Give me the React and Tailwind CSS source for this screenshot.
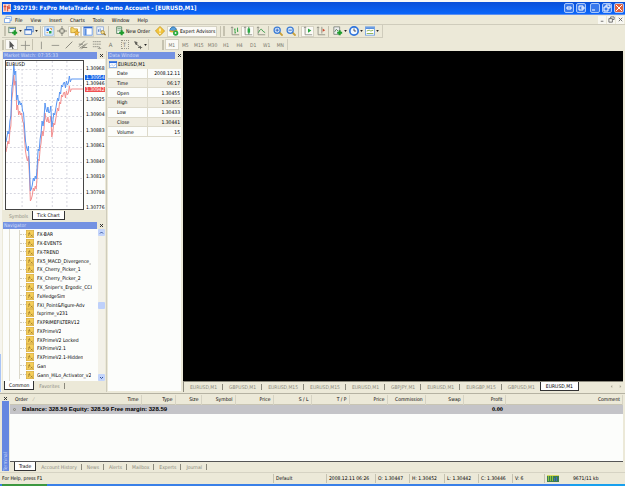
import React, { useState } from 'react';

const menus = ['File', 'View', 'Insert', 'Charts', 'Tools', 'Window', 'Help'];
const periods = ['M1', 'M5', 'M15', 'M30', 'H1', 'H4', 'D1', 'W1', 'MN'];
const prices = ['1.30968', '1.30946', '1.30925', '1.30904', '1.30883', '1.30861', '1.30840', '1.30819', '1.30798', '1.30776'];
const dataRows = [
  ['Date', '2008.12.11'],
  ['Time', '06:17'],
  ['Open', '1.30455'],
  ['High', '1.30455'],
  ['Low', '1.30433'],
  ['Close', '1.30441'],
  ['Volume', '15'],
];
const indicators = [
  'FX-BAR', 'FX-EVENTS', 'FX-TREND', 'FX5_MACD_Divergence_', 'FX_Cherry_Picker_1', 'FX_Cherry_Picker_2',
  "FX_Sniper's_Ergodic_CCI", 'FxHedgeSim', 'FXI_Point&Figure-Adv', 'fxprime_v231', 'FXPRIMEFILTERV12', 'FXPrimeV2',
  'FXPrimeV2 Locked', 'FXPrimeV2.1', 'FXPrimeV2.1-Hidden', 'Gan', 'Gann_HiLo_Activator_v2',
];
const charts = ['EURUSD,M1', 'GBPUSD,M1', 'EURUSD,M15', 'EURUSD,M15', 'EURUSD,M1', 'GBPJPY,M1', 'EURUSD,M1', 'EURGBP,M15', 'GBPUSD,M1', 'EURUSD,M1'];
const columns = [
  ['Time', 'w-[84px]'],
  ['Type', 'w-[34px]'],
  ['Size', 'w-[26px]'],
  ['Symbol', 'w-[34px]'],
  ['Price', 'w-[38px]'],
  ['S / L', 'w-[38px]'],
  ['T / P', 'w-[38px]'],
  ['Price', 'w-[38px]'],
  ['Commission', 'w-[38px]'],
  ['Swap', 'w-[38px]'],
  ['Profit', 'w-[42px]'],
  ['Comment', ''],
];
const terminalTabs = ['Trade', 'Account History', 'News', 'Alerts', 'Mailbox', 'Experts', 'Journal'];

const axes = <path d="M2.5 1v9.500H11M1 2.500l1.500-1.500 1.500 1.500" stroke="#8a8a80" fill="none" />;
const plus = <path d="M8 5v6M5 8h6" stroke="#1c9c2c" strokeWidth="2.500" />;

const icons = {
  newChart: <><rect x="1" y="1.500" width="8" height="6.500" fill="#f4f8f4" stroke="#5b7f62" /><path d="M2 3h6" stroke="#3c6fc4" />{plus}</>,
  profiles: <><rect x="3" y="1" width="8" height="6" fill="#cfe2fb" stroke="#4a7cc8" /><rect x="1" y="4" width="8" height="6" fill="#f3f8ff" stroke="#4a7cc8" /><path d="M1 4.500h8" stroke="#2b62c0" strokeWidth="1.500" /></>,
  market: <><rect x="1" y="1" width="10" height="10" fill="#eaf5ff" stroke="#7fb0e8" /><path d="M3 3h3v3H3z" fill="#2b6bd0" /><path d="M6 6h3v3H6z" fill="#2a9c4a" /><path d="M7 3h2v2M3 8h2" stroke="#d88a24" fill="none" /></>,
  cross: <><circle cx="6" cy="6" r="3" fill="none" stroke="#77776e" /><path d="M6 0v5M6 7v5M0 6h5M7 6h5" stroke="#77776e" /></>,
  folder: <><path d="M1 2h3l1 1.500h4V8H1z" fill="#f7d668" stroke="#c69a2a" /><path d="M8 5l1 2 2.500.4-2 1.600.5 2.500L8 10.500l-2 1 .5-2.500L5 7.500l2-.5z" fill="#f5b93c" stroke="#a3761a" strokeWidth=".5" /></>,
  dataWin: <><rect x="1" y="1" width="10" height="10" fill="#fff" stroke="#5a8ee0" /><path d="M1 2h10" stroke="#2c64cc" strokeWidth="1.500" /><path d="M3 3v8" stroke="#5a8ee0" strokeWidth="2.500" /></>,
  tester: <><rect x="1" y="1" width="8" height="9" fill="#eef3fb" stroke="#8aa6d4" /><path d="M3 7V4M5 7V3M7 7V5" stroke="#4a78c0" /><circle cx="8" cy="7.500" r="2" fill="#f8e39a" stroke="#b08a2c" /><path d="M9.500 9l2 2" stroke="#8c6c24" strokeWidth="1.500" /></>,
  order: <><path d="M2 1h6v8H2z" fill="#eef6ee" stroke="#4c7c58" /><path d="M3 3h4M3 5h4" stroke="#77a07f" />{plus}</>,
  warn: <><path d="M6 .5L11.500 6 6 11.500.5 6z" fill="#f3c53a" stroke="#c99a24" /><path d="M6 3v3.500M6 8v1.500" stroke="#fff" strokeWidth="1.500" /></>,
  expert: <><path d="M1 6c0-3 2-5 4-5s4 2 4 4z" fill="#58a0dc" stroke="#2a6ca8" /><path d="M1 6c2 1 5 1 9-1" stroke="#e6b030" strokeWidth="2" fill="none" /><circle cx="8" cy="8.500" r="3.200" fill="#27a83c" /><path d="M7 7l2.500 1.500L7 10z" fill="#fff" /></>,
  bars: <>{axes}<path d="M6 3v6M5 4h1M6 8h1M9 2v5M9 6h1" stroke="#239a38" /></>,
  candles: <>{axes}<path d="M7 1v9" stroke="#1a7c2c" /><path d="M5.500 3h3v5h-3z" fill="#2aa844" /></>,
  line: <>{axes}<path d="M3 8c2-5 4-5 5-2l3 2" stroke="#2c9440" fill="none" /></>,
  zoomIn: <><path d="M7.500 7.500l4 4" stroke="#c9a038" strokeWidth="2.200" /><circle cx="5" cy="5" r="3.700" fill="#d7eaff" stroke="#3d7cd4" strokeWidth="1.500" /><path d="M3 5h4M5 3v4" stroke="#2357b4" /></>,
  zoomOut: <><path d="M7.500 7.500l4 4" stroke="#c9a038" strokeWidth="2.200" /><circle cx="5" cy="5" r="3.700" fill="#d7eaff" stroke="#3d7cd4" strokeWidth="1.500" /><path d="M3 5h4" stroke="#2357b4" /></>,
  scroll: <>{axes}<path d="M6 3l4 2.500L6 8z" fill="#28a440" /></>,
  shift: <>{axes}<path d="M7 1v8" stroke="#8a8a80" /><path d="M8 3l3 2-3 2z" fill="#cc4a30" /></>,
  addInd: <><path d="M1 1h7v9H1z" fill="#eee" stroke="#788078" /><path d="M2 7l2-3 2 2" stroke="#4a7450" fill="none" />{plus}</>,
  clock: <><circle cx="6" cy="6" r="5" fill="#f3f9ff" stroke="#2f74dc" strokeWidth="2" /><path d="M6 3v3h2.500" stroke="#334" fill="none" /></>,
  template: <><rect x=".5" y="1" width="11" height="10" fill="#fff" stroke="#6a9ce0" /><path d="M1 2.500h10" stroke="#4a86dc" strokeWidth="2" /><path d="M2 6l3-1 2 1 3-1M2 9h8" stroke="#7aa63c" fill="none" /></>,
  cursor: <path d="M3 1v9l2.200-2 1.500 3 1.300-.6L6.600 7.500H9z" fill="#555" />,
  plus: <path d="M6.500 1v11M1 6.500h11" stroke="#8b8b82" />,
  vline: <path d="M6.500 2v9" stroke="#8b8b82" />,
  hline: <path d="M2 6.500h9" stroke="#8b8b82" />,
  trend: <path d="M2 10l8-8" stroke="#77776e" />,
  channel: <path d="M1 8l7-7M4 11l7-7M2 10l7-5M1 5h5M5 9h6" stroke="#77776e" fill="none" />,
  fibo: <path d="M1 2h10M1 5h10M1 8h7M9 8v3M7 10h4" stroke="#8b8b82" strokeDasharray="2 .5" />,
  arrows: <path d="M2 2l3 1-1 3zM3 4l6 5M6 9h5M9 7v4" stroke="#5c5c56" fill="#5c5c56" />,
};

const Icon = ({ name }) => <svg viewBox="0 0 12 12" className="size-[10px] shrink-0">{icons[name]}</svg>;

const Tool = ({ name, label, on, drop, children }) => (
  <button
    aria-label={label || name}
    className={`flex h-[11px] shrink-0 items-center justify-center gap-px border ${drop ? 'w-[16px]' : name && children ? 'px-px' : 'w-[13px]'} ${on ? 'border-[#d6d3c3] bg-[#fbfaf6]' : 'border-transparent'}`}
  >
    {name && <Icon name={name} />}
    {children}
    {drop && <svg viewBox="0 0 4 3" className="h-[2px] w-[3px] shrink-0"><path d="M0 0h4L2 3z" fill="#222" /></svg>}
  </button>
);

const Sep = () => <span className="mx-px h-[11px] w-px shrink-0 bg-[#c5c2b0]" />;
const Grip = () => <span className="mx-px h-[10px] w-[2px] shrink-0 border-x border-[#c5c2b0]" />;
const Cross = () => <svg viewBox="0 0 5 5" className="size-[5px]"><path d="M1 1l3 3M4 1L1 4" stroke="#222" strokeWidth=".9" /></svg>;

const PanelTitle = ({ children }) => (
  <div className="flex h-[7px] shrink-0 items-center justify-between bg-[#7492e2] pl-px leading-[7px] text-[#d3def9]">
    <span>{children}</span>
    <button aria-label={`Close ${children}`} className="flex h-[7px] w-[8px] items-center justify-center bg-[#ece9d8]"><Cross /></button>
  </div>
);

const Tabs = ({ items, active, onPick, down }) => (
  <div className="flex h-[9px] shrink-0 items-center leading-[8px] text-[#8b897c]">
    {items.map((t, i) => (
      <button
        key={i}
        onClick={() => onPick(i)}
        className={`h-[9px] whitespace-nowrap ${i === active ? 'border border-t-0 border-[#333] bg-white px-[4px] text-black' : 'pl-[5px]'}`}
      >
        <span className={i === active ? '' : down ? 'border-r border-[#8b897c] pr-[4px]' : 'pr-[4px]'}>{t}</span>
      </button>
    ))}
  </div>
);

const bid = '0,81 2,70 3,73 4,60 5,55 6,28 7,20 8,4 9,14 10,10 11,39 12,34 13,44 14,40 15,44 16,42 17,50 18,52 19,66 20,80 21,86 22,90 23,85 24,104 25,130 26,128 27,124 28,117 29,120 30,115 31,118 32,105 33,88 34,90 35,78 36,72 37,60 38,65 39,58 40,42 41,48 42,51 43,46 44,52 45,51 46,45 47,66 48,61 49,52 50,54 51,48 52,42 53,37 54,40 55,31 56,33 57,24 58,26 59,22 60,21 61,27 62,20 63,24 64,22 65,15 66,21 67,18 79,18';

const TickChart = () => (
  <svg viewBox="0 0 79 148" preserveAspectRatio="none" className="h-full w-full border border-[#444] bg-white" fill="none">
    <path d="M16.500 0v148M31.500 0v148M47.500 0v148M62.500 0v148M0 8.500h79M0 24.500h79M0 39.500h79M0 55.500h79M0 70.500h79M0 86.500h79M0 101.500h79M0 117.500h79M0 132.500h79" stroke="#d5d5de" strokeDasharray="2 2" />
    <g transform="translate(0 10)"><polyline points={bid} stroke="#f38c8c" /></g>
    <polyline points={bid} stroke="#5593f2" />
  </svg>
);

const WinButton = ({ label, red, d }) => (
  <button aria-label={label} className={`flex size-[10px] items-center justify-center rounded-[2px] border border-[#a9c8fb] ${red ? 'bg-[#e0603c]' : 'bg-[#3878ec]'}`}>
    <svg viewBox="0 0 8 8" className="size-[8px]"><path d={d} stroke="#fff" fill="none" /></svg>
  </button>
);

const App = () => {
  const [period, setPeriod] = useState('M1');
  const [watchTab, setWatchTab] = useState(1);
  const [navTab, setNavTab] = useState(0);
  const [chartTab, setChartTab] = useState(9);
  const [termTab, setTermTab] = useState(0);

  return (
    <div className="flex h-screen min-h-[420px] flex-col overflow-hidden bg-[#ece9d8] font-['DejaVu_Sans_Condensed','DejaVu_Sans',sans-serif] text-[5px] leading-[8px] text-black">
      <div className="h-[2px] shrink-0 bg-[#f8f9f6]" />
      <header className="ml-[2px] flex h-[13px] shrink-0 items-center border-b border-[#5c8ff0] bg-gradient-to-b from-[#0a50d8] to-[#0a66fa] px-px text-white">
        <svg viewBox="0 0 12 12" className="mr-[2px] size-[8px]">
          <rect width="12" height="12" fill="#f6d4cc" />
          <path d="M3 1v9M1 4h4M7 3v8M9 1v6M7 6h4" stroke="#d8402c" strokeWidth="1.500" />
        </svg>
        <h1 className="whitespace-nowrap text-[6px] font-bold">392719: FxPro MetaTrader 4 - Demo Account - [EURUSD,M1]</h1>
        <div className="ml-auto flex gap-[2px]">
          <WinButton label="Span" d="M1 4h2M5 4h2M3 2v4M5 2v4" />
          <WinButton label="Move" d="M2 2h4v4H2zM4 4h4" />
          <span />
          <WinButton label="Minimize" d="M1 6h3" />
          <WinButton label="Restore" d="M3 3V1h4v3H5M1 3h4v4H1z" />
          <WinButton label="Close" red d="M1 1l6 6M7 1L1 7" />
        </div>
      </header>

      <nav className="ml-[2px] flex h-[10px] shrink-0 items-center border-b border-[#cfccbc] pl-[2px]">
        <svg viewBox="0 0 12 12" className="mr-[3px] size-[8px]">
          <rect x="3" y="1" width="8" height="6" fill="#e8f2ff" stroke="#6fa0e4" />
          <rect x="1" y="4" width="8" height="6" fill="#fff" stroke="#5a90e0" />
        </svg>
        <div className="flex gap-[8px]">
          {menus.map((m) => <button key={m}>{m}</button>)}
        </div>
        <div className="ml-auto flex gap-px pr-px">
          {[['Minimize chart', 'M2 6h3'], ['Restore chart', 'M3 3V1h4v3H5M1 3h4v4H1z'], ['Close chart', 'M2 2l4 4M6 2L2 6']].map(([label, d]) => (
            <button key={label} aria-label={label} className="flex size-[8px] items-center justify-center bg-[#f8f7f1]">
              <svg viewBox="0 0 8 8" className="size-[7px]"><path d={d} stroke="#666" fill="none" /></svg>
            </button>
          ))}
        </div>
      </nav>

      <div className="ml-[2px] flex h-[13px] shrink-0 items-center">
        <div className="flex h-full items-center border-b border-r border-[#cfccbc] pl-px">
          <Grip />
          <Tool name="newChart" drop />
          <Tool name="profiles" drop />
          <Sep />
          <Tool name="market" on />
          <Tool name="cross" />
          <Tool name="folder" on />
          <Tool name="dataWin" on />
          <Tool name="tester" />
          <Sep />
          <span className="w-[3px]" />
          <Tool name="order">New Order</Tool>
          <span className="w-px" />
          <Tool name="warn" />
          <span className="w-px" />
          <Tool name="expert" on>Expert Advisors</Tool>
          <span className="w-[2px]" />
          <Sep />
          <Grip />
          <span className="w-[2px]" />
          <Tool name="bars" />
          <Tool name="candles" on />
          <Tool name="line" />
          <Sep />
          <span className="w-px" />
          <Tool name="zoomIn" />
          <Tool name="zoomOut" />
          <Sep />
          <span className="w-px" />
          <Tool name="scroll" on />
          <Tool name="shift" />
          <Sep />
          <span className="w-[2px]" />
          <Tool name="addInd" drop />
          <Tool name="clock" drop />
          <Tool name="template" drop />
          <span className="w-[2px]" />
        </div>
      </div>

      <div className="ml-[2px] flex h-[13px] shrink-0 items-center text-[#77756a]">
        <div className="flex w-[147px] shrink-0 items-center border-r border-[#cfccbc]">
          <span className="mr-px h-[10px] w-[2px] shrink-0 border-x border-[#c5c2b0]" />
          <Tool name="cursor" on />
          <Tool name="plus" />
          <Sep />
          <div className="flex flex-1 items-center justify-between">
            <Tool name="vline" />
            <Tool name="hline" />
            <Tool name="trend" />
            <Tool name="channel" />
            <Tool name="fibo" />
            <Tool label="Text"><span className="text-[6px]">A</span></Tool>
            <Tool label="Text label"><span className="w-[8px] border border-dotted border-[#9a988c] text-[6px] leading-[7px]">T</span></Tool>
            <Tool name="arrows" drop />
          </div>
        </div>
        <div className="ml-[12px] flex w-[127px] shrink-0 items-center border-r border-[#cfccbc]">
          <Grip />
          {periods.map((p) => (
            <button
              key={p}
              onClick={() => setPeriod(p)}
              className={`h-[11px] min-w-0 flex-1 border text-center ${p === period ? 'border-[#d6d3c3] bg-[#fbfaf6]' : 'border-transparent'}`}
            >
              {p}
            </button>
          ))}
        </div>
      </div>

      <main className="flex min-h-0 flex-1">
        <div className="flex w-[2px] shrink-0 flex-col justify-end bg-[#f6f5ee]"><span className="h-[38px] w-px bg-[#a8c4f6]" /></div>

        <div className="flex w-[104px] shrink-0 flex-col pl-px pr-px pt-px">
          <section className="flex h-[170px] shrink-0 flex-col">
            <PanelTitle>Market Watch: 07:35:33</PanelTitle>
            <div className="flex min-h-0 flex-1 bg-[#fcfdfb] pl-[2px] pt-px">
              <div className="relative min-w-0 flex-1">
                <TickChart />
                <span className="absolute left-px top-0">EURUSD</span>
              </div>
              <div className="relative flex w-[21px] flex-col justify-between pl-[2px] pt-[6px]">
                {prices.map((p) => <span key={p} className="leading-[5px]">{p}</span>)}
                <span className="absolute left-px top-[15px] w-[20px] bg-[#1464e8] pl-px leading-[5px] text-white">1.30954</span>
                <span className="absolute left-px top-[27px] w-[20px] bg-[#f05050] pl-px leading-[5px] text-white">1.30942</span>
              </div>
            </div>
            <div className="pb-[2px] pl-px pt-px"><Tabs items={['Symbols', 'Tick Chart']} active={watchTab} onPick={setWatchTab} /></div>
          </section>

          <section className="flex min-h-0 flex-1 flex-col">
            <PanelTitle>Navigator</PanelTitle>
            <div className="flex min-h-0 flex-1 bg-[#fcfdfb]">
              <ul className="ml-[6px] flex min-w-0 flex-1 flex-col border-l border-[#e2dfd2] pb-[2px] pt-px">
                {indicators.map((name) => (
                  <li key={name} className="ml-[9px] flex min-h-0 flex-1 items-center border-l border-[#dcd9cb]">
                    <span className="w-[6px] shrink-0 border-t border-dotted border-[#cfccbc]" />
                    <svg viewBox="0 0 12 12" className="mr-[3px] size-[8px] shrink-0">
                      <rect x=".5" y=".5" width="11" height="11" fill="#f4cd58" stroke="#d6a83a" />
                      <path d="M6 3c-2 0-1 6-3 6M3.500 5.500h3M7 7l3 3M10 7l-3 3" stroke="#94722a" fill="none" />
                    </svg>
                    <span className="overflow-hidden whitespace-nowrap">{name}</span>
                  </li>
                ))}
              </ul>
              <div className="flex w-[7px] shrink-0 flex-col items-center bg-[#f3f1e8]">
                <button aria-label="Scroll up" className="h-[7px] w-full rounded-[1px] bg-[#c3d4fb]">
                  <svg viewBox="0 0 7 7" className="size-[7px]"><path d="M2 4.500L3.500 3 5 4.500" stroke="#34549c" fill="none" /></svg>
                </button>
                <span className="mt-[66px] h-[7px] w-full rounded-[1px] bg-[#bed0fa]" />
                <button aria-label="Scroll down" className="mt-auto h-[7px] w-full rounded-[1px] bg-[#c3d4fb]">
                  <svg viewBox="0 0 7 7" className="size-[7px]"><path d="M2 3l1.500 1.500L5 3" stroke="#34549c" fill="none" /></svg>
                </button>
              </div>
            </div>
            <div className="pb-[2px] pl-px"><Tabs items={['Common', 'Favorites']} active={navTab} onPick={setNavTab} down /></div>
          </section>
        </div>

        <section className="flex w-[77px] shrink-0 flex-col border-l border-[#cfccbc] pl-px pt-px">
          <PanelTitle>Data Window</PanelTitle>
          <div className="mb-px mr-[2px] flex-1 bg-[#fcfdfb]">
            <div className="flex h-[10px] items-center gap-px bg-[#ece9d8] pl-px">
              <svg viewBox="0 0 14 12" className="h-[7px] w-[8px]">
                <rect x=".5" y=".5" width="13" height="11" fill="#fff" stroke="#3f7ce0" />
                <path d="M0 2h14" stroke="#2c6ce0" strokeWidth="3" />
                <path d="M2 9l3-3 3 3 4-4" stroke="#7ba4e4" fill="none" />
              </svg>
              EURUSD,M1
            </div>
            <table className="h-[68px] w-full border-collapse">
              <tbody>
                {dataRows.map(([k, v]) => (
                  <tr key={k} className="border-b border-[#dddacb] even:bg-[#efece0]">
                    <th scope="row" className="w-[39px] border-r border-[#dddacb] p-0 pl-[9px] text-left font-normal">{k}</th>
                    <td className="p-0 pr-px text-right">{v}</td>
                  </tr>
                ))}
              </tbody>
            </table>
          </div>
        </section>

        <section className="flex min-w-0 flex-1 flex-col pr-[2px]">
          <div className="flex-1 bg-black" />
          <div className="flex h-[11px] shrink-0 items-start border-l border-t border-[#8b897c] leading-[8px] text-[#8b897c]">
            {charts.map((c, i) => (
              <button
                key={i}
                onClick={() => setChartTab(i)}
                className={`flex h-[9px] items-center whitespace-nowrap ${i === chartTab ? 'border border-t-0 border-[#333] bg-white px-[5px] text-black' : 'pl-[6px]'}`}
              >
                <span className={i === chartTab ? '' : i === 8 ? 'pr-[5px]' : 'border-r border-[#8b897c] pr-[5px] leading-[6px]'}>{c}</span>
              </button>
            ))}
            <div className="ml-auto flex gap-[6px] pr-px pt-[2px]">
              <svg viewBox="0 0 4 6" className="h-[5px] w-[3px]"><path d="M3 1L1 3l2 2z" fill="#aaa796" /></svg>
              <svg viewBox="0 0 4 6" className="h-[5px] w-[3px]"><path d="M1 1l2 2-2 2z" fill="#aaa796" /></svg>
            </div>
          </div>
        </section>
      </main>

      <section className="mt-px flex h-[79px] shrink-0 border-t border-[#b5b2a2] pl-[2px] pr-[2px] pt-px">
        <div className="flex w-[7px] shrink-0 flex-col">
          <button aria-label="Close Terminal" className="flex h-[6px] items-center justify-center"><Cross /></button>
          <div className="mb-px flex flex-1 items-center bg-[#6587e0] text-[#c9d6f8] [writing-mode:vertical-rl]">
            <span className="mt-auto rotate-180 leading-[7px]">Terminal</span>
          </div>
        </div>
        <div className="flex min-w-0 flex-1 flex-col pl-px">
          <div className="flex-1 border-b border-[#555] bg-[#fcfdfb]">
            <table className="w-full table-fixed border-collapse">
              <thead>
                <tr className="h-[9px] border-b border-[#c8c5b4] bg-[#ece9d8]">
                  <th className="w-[47px] p-0 pl-[5px] text-left font-normal">Order <span className="ml-[4px] text-[#aaa796]">⁄</span></th>
                  {columns.map(([c, w], i) => (
                    <th key={i} className={`${w} whitespace-nowrap border-r border-[#d6d3c3] p-0 pr-[2px] text-right font-normal`}>{c}</th>
                  ))}
                </tr>
              </thead>
              <tbody>
                <tr className="h-[10px] bg-[#c4c4c8] font-bold">
                  <td colSpan={11} className="whitespace-nowrap p-0 pl-[3px] font-['Liberation_Sans',sans-serif] text-[6px] leading-[8px]">
                    <span className="mr-[6px] inline-block size-[3px] rounded-full border border-[#88867a]" />
                    Balance: 328.59 Equity: 328.59 Free margin: 328.59
                  </td>
                  <td className="p-0 pr-[2px] text-right">0.00</td>
                  <td />
                </tr>
              </tbody>
            </table>
          </div>
          <div className="pb-px pl-[4px]"><Tabs items={terminalTabs} active={termTab} onPick={setTermTab} down /></div>
        </div>
      </section>

      <footer className="flex h-[12px] shrink-0 items-center border-t border-[#d6d3c3] pl-[2px] leading-[9px]">
        <span className="flex-1">For Help, press F1</span>
        <span className="w-[53px] border-l border-[#c5c2b0] pl-[2px]">Default</span>
        <span className="w-[49px] whitespace-nowrap border-l border-[#c5c2b0] pl-[2px]">2008.12.11 06:26</span>
        <span className="w-[34px] border-l border-[#c5c2b0] pl-[2px]">O: 1.30447</span>
        <span className="w-[35px] border-l border-[#c5c2b0] pl-[2px]">H: 1.30452</span>
        <span className="w-[34px] border-l border-[#c5c2b0] pl-[2px]">L: 1.30442</span>
        <span className="w-[34px] border-l border-[#c5c2b0] pl-[2px]">C: 1.30446</span>
        <span className="w-[32px] border-l border-[#c5c2b0] pl-[2px]">V: 6</span>
        <span className="flex w-[81px] items-center gap-[14px] border-l border-[#c5c2b0] pl-[2px]">
          <svg viewBox="0 0 12 7" className="h-[7px] w-[12px]">
            <rect width="12" height="7" fill="#3c7c50" />
            <path d="M1.500 1v5M3.500 1v5M5.500 1v5" stroke="#8cc43c" />
            <path d="M7.500 3v3M9.500 2v4" stroke="#3c68c8" />
            <path d="M0 .5h12" stroke="#d8d860" />
          </svg>
          9671/11 kb
        </span>
      </footer>
      <div className="flex h-[2px] shrink-0 bg-[#3a80e8] pl-[2px]"><span className="w-[45px] bg-[#3c9840]" /><span className="ml-auto w-[55px] bg-[#18a0ee]" /></div>
    </div>
  );
};

export default App;
